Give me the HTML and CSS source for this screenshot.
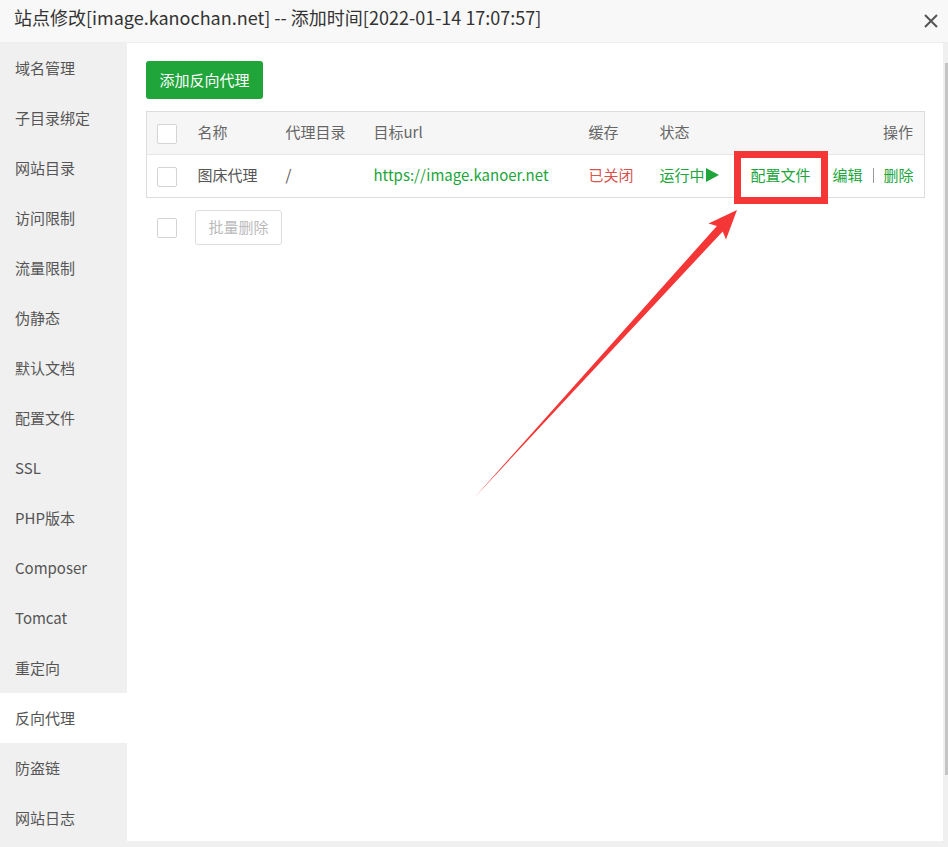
FILE: index.html
```html
<!DOCTYPE html>
<html lang="zh-CN">
<head>
    <meta charset="UTF-8">
    <title>站点修改</title>
    <link rel="stylesheet" href="styles.css">
</head>
<body>

    <div class="layer">
        <div class="layer-title">
            <span>站点修改[image.kanochan.net] -- 添加时间[2022-01-14 17:07:57]</span>
            <svg class="layer-close" width="16" height="16" viewBox="0 0 16 16">
                <path d="M2 2L14 14M14 2L2 14" stroke="#555" stroke-width="2" fill="none"/>
            </svg>
        </div>

        <div class="layer-main">
            <ul class="side-menu">
                <li>域名管理</li>
                <li>子目录绑定</li>
                <li>网站目录</li>
                <li>访问限制</li>
                <li>流量限制</li>
                <li>伪静态</li>
                <li>默认文档</li>
                <li>配置文件</li>
                <li>SSL</li>
                <li>PHP版本</li>
                <li>Composer</li>
                <li>Tomcat</li>
                <li>重定向</li>
                <li class="active">反向代理</li>
                <li>防盗链</li>
                <li>网站日志</li>
            </ul>

            <div class="content">
                <button class="btn-green">添加反向代理</button>

                <table class="proxy-table">
                    <colgroup>
                        <col style="width:51px">
                        <col style="width:88px">
                        <col style="width:88px">
                        <col style="width:215px">
                        <col style="width:71px">
                        <col style="width:91px">
                        <col>
                    </colgroup>
                    <thead>
                        <tr>
                            <th><span class="check"></span></th>
                            <th>名称</th>
                            <th>代理目录</th>
                            <th>目标url</th>
                            <th>缓存</th>
                            <th>状态</th>
                            <th class="ops">操作</th>
                        </tr>
                    </thead>
                    <tbody>
                        <tr>
                            <td><span class="check"></span></td>
                            <td>图床代理</td>
                            <td>/</td>
                            <td class="green">https://image.kanoer.net</td>
                            <td class="red">已关闭</td>
                            <td class="green">运行中<span class="play"></span></td>
                            <td class="ops">
                                <a class="conf-link">配置文件<span class="mark-box"></span></a><a>编辑</a><span class="sep"></span><a>删除</a>
                            </td>
                        </tr>
                    </tbody>
                </table>

                <div class="batch-row">
                    <span class="check"></span>
                    <button class="btn-disabled">批量删除</button>
                </div>
            </div>

            <div class="scrollbar"><div class="thumb"></div></div>
        </div>

        <!-- annotation arrow drawn over the page -->
        <svg class="mark-arrow" width="948" height="847" viewBox="0 0 948 847">
            <polygon points="474,498 722.7,231.4 726,239.5 737,210 708.5,223.5 716.9,226 474,498" fill="#f43636"/>
        </svg>
    </div>

</body>
</html>
```

FILE: styles.css
```css
* {
    box-sizing: border-box;
}

body {
    margin: 0;
    background-color: #f0f0f0;
    font-family: "Noto Sans CJK SC", "Noto Sans", sans-serif;
    color: #555;
}

.layer {
    position: relative;
    width: 948px;
    height: 847px;
    overflow: hidden;
}

.layer-title {
    height: 43px;
    display: flex;
    align-items: center;
    justify-content: space-between;
    padding: 0 9px 8px 14px;
    background-color: #f8f8f8;
    border-bottom: 1px solid #eee;
    font-size: 18px;
    color: #333;
}

.layer-close {
    margin-top: 8px;
}

.layer-main {
    display: flex;
    height: 798px;
}

.side-menu {
    list-style: none;
    margin: 0;
    padding: 0;
    width: 127px;
    flex-shrink: 0;
    background-color: #f0f0f0;
}

.side-menu li {
    height: 50px;
    line-height: 50px;
    padding-left: 15px;
    font-size: 15px;
    color: #555;
}

.side-menu li.active {
    background-color: #fff;
}

.content {
    flex: 1;
    background-color: #fff;
    padding: 18px 18px 0 19px;
}

.scrollbar {
    width: 5px;
    background-color: #f0f0f0;
    padding-top: 20px;
}

.scrollbar .thumb {
    width: 3px;
    height: 712px;
    margin-left: 2px;
    background-color: #c4c4c4;
}

.btn-green {
    display: block;
    height: 38px;
    width: 117px;
    border: none;
    border-radius: 3px;
    background-color: #20a53a;
    color: #fff;
    font-family: inherit;
    font-size: 15px;
    padding: 0 0 2px;
}

.proxy-table {
    width: 779px;
    margin-top: 12px;
    border-collapse: collapse;
    table-layout: fixed;
    border: 1px solid #ddd;
    font-size: 15px;
}

.proxy-table th,
.proxy-table td {
    height: 43px;
    padding: 0 0 3px;
    text-align: left;
    white-space: nowrap;
}

.proxy-table th {
    background-color: #f6f6f6;
    font-weight: normal;
    color: #666;
    border-bottom: 1px solid #e6e6e6;
}

.proxy-table th:first-child,
.proxy-table td:first-child {
    padding: 0 0 0 10px;
}

.proxy-table .ops {
    text-align: right;
    padding-right: 11px;
}

.check {
    display: inline-block;
    width: 20px;
    height: 20px;
    border: 1px solid #d4d4d4;
    border-radius: 2px;
    background-color: #fff;
    vertical-align: middle;
}

.green {
    color: #20a53a;
}

.red {
    color: #d9534f;
}

.play {
    display: inline-block;
    width: 0;
    height: 0;
    margin-left: 1px;
    border-left: 13px solid #20a53a;
    border-top: 7px solid transparent;
    border-bottom: 7px solid transparent;
    vertical-align: -1px;
}

.ops a {
    color: #20a53a;
}

.conf-link {
    position: relative;
    margin-right: 22px;
}

/* red annotation frame around the config link */
.mark-box {
    position: absolute;
    left: -17px;
    top: -13px;
    width: 94px;
    height: 53px;
    border: 7px solid #f43636;
}

.sep {
    display: inline-block;
    width: 1px;
    height: 15px;
    margin: 0 10px;
    background-color: #999;
    vertical-align: -2px;
}

.batch-row {
    display: flex;
    align-items: center;
    margin-top: 12px;
    padding-left: 11px;
}

.btn-disabled {
    margin-left: 18px;
    height: 35px;
    width: 87px;
    padding: 0 0 2px;
    border: 1px solid #ddd;
    border-radius: 3px;
    background-color: #fff;
    color: #bbb;
    font-family: inherit;
    font-size: 15px;
}

.mark-arrow {
    position: absolute;
    left: 0;
    top: 0;
    pointer-events: none;
}
```
